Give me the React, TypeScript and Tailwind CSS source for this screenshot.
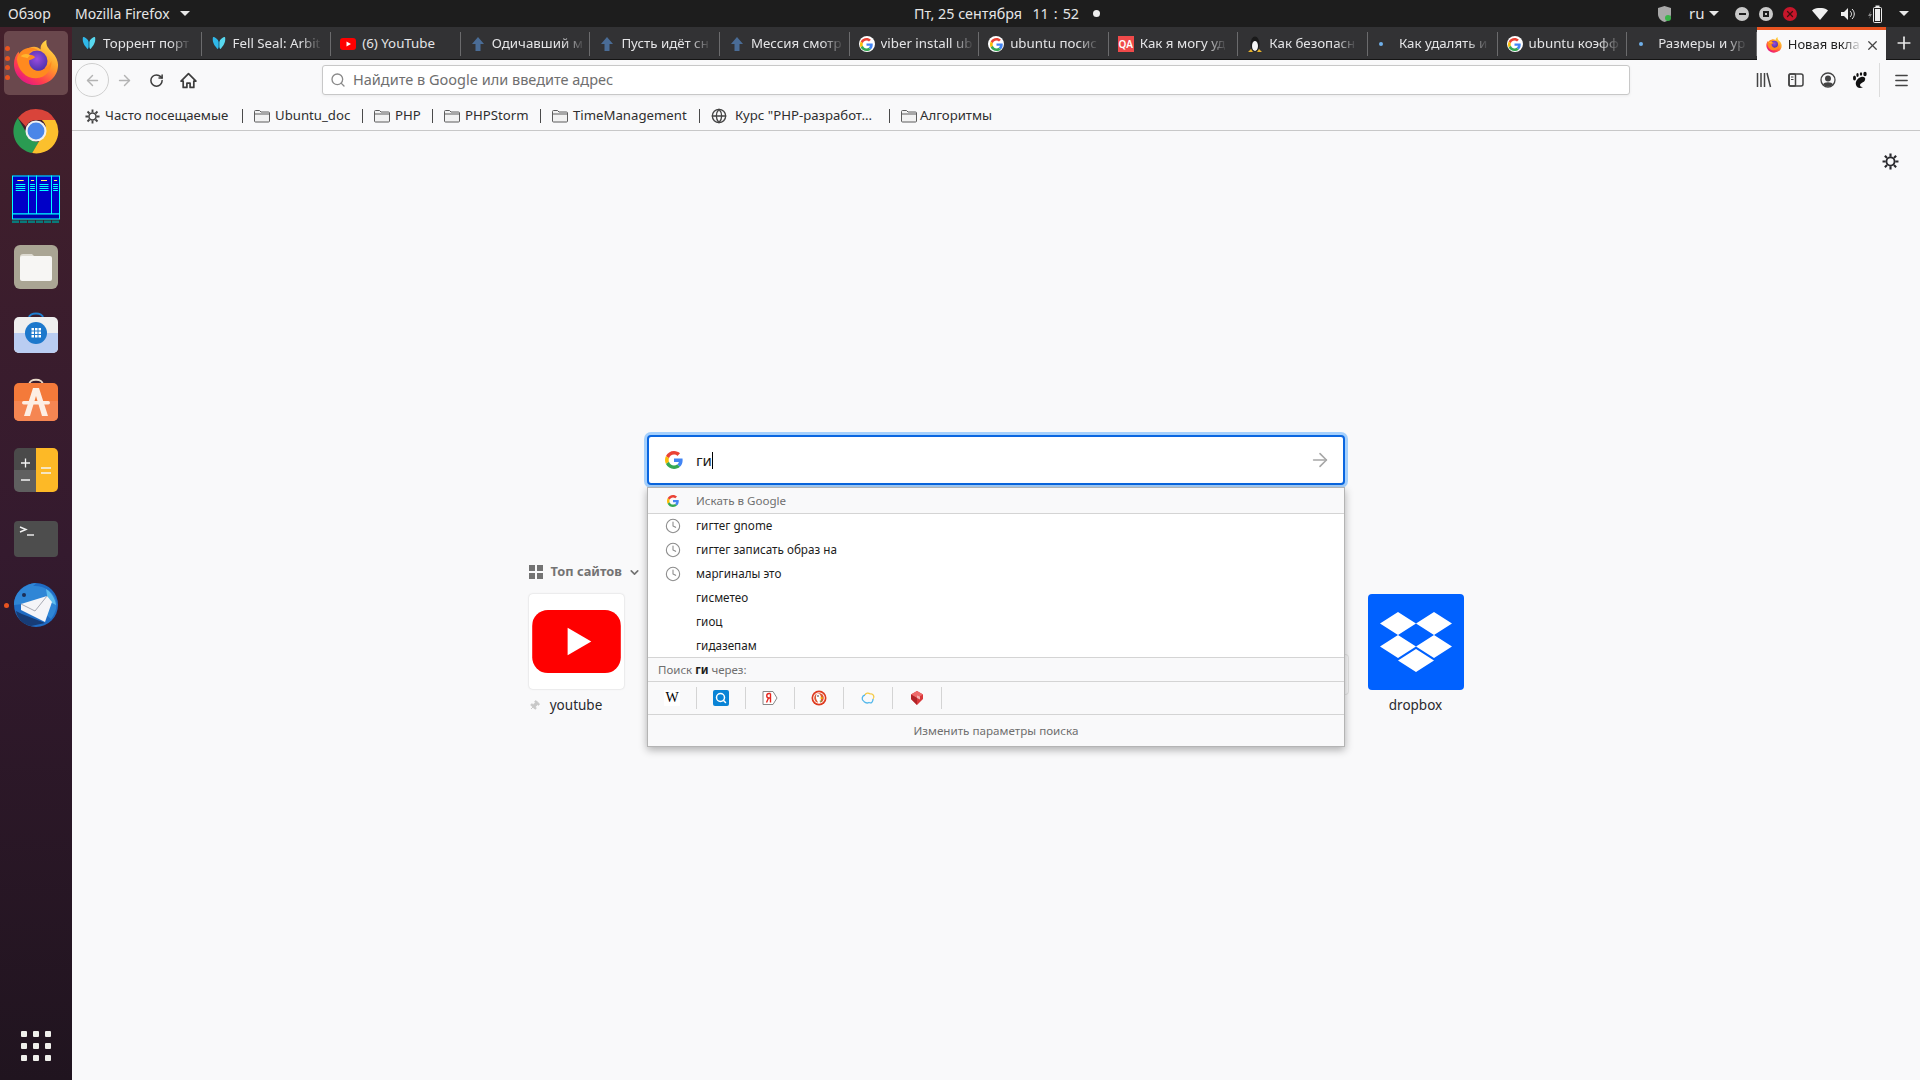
import React from "react";
import { ArrowLeft, ArrowRight, RotateCw, Search, Clock, ChevronDown, X, Plus, Globe, Menu, Pin } from "lucide-react";

function GoogleG({ size = 16 }: { size?: number }) {
  return (
    <svg width={size} height={size} viewBox="0 0 48 48">
      <path fill="#EA4335" d="M24 9.5c3.54 0 6.71 1.22 9.21 3.6l6.85-6.85C35.9 2.38 30.47 0 24 0 14.62 0 6.51 5.38 2.56 13.22l7.98 6.19C12.43 13.72 17.74 9.5 24 9.5z" />
      <path fill="#4285F4" d="M46.98 24.55c0-1.57-.15-3.09-.38-4.55H24v9.02h12.94c-.58 2.96-2.26 5.48-4.78 7.18l7.73 6c4.51-4.18 7.09-10.36 7.09-17.65z" />
      <path fill="#FBBC05" d="M10.53 28.59c-.48-1.45-.76-2.99-.76-4.59s.27-3.14.76-4.59l-7.98-6.19C.92 16.46 0 20.12 0 24c0 3.88.92 7.54 2.56 10.78l7.97-6.19z" />
      <path fill="#34A853" d="M24 48c6.48 0 11.93-2.13 15.89-5.81l-7.73-6c-2.15 1.45-4.92 2.3-8.16 2.3-6.26 0-11.57-4.22-13.47-9.91l-7.98 6.19C6.51 42.62 14.62 48 24 48z" />
    </svg>
  );
}

function SunGear({ size = 16, color = "#2a2a2e" }: { size?: number; color?: string }) {
  return (
    <svg width={size} height={size} viewBox="0 0 16 16" className="shrink-0">
      <circle cx="8" cy="8" r="3.800" fill="none" stroke={color} strokeWidth="1.700" />
      <path d="M8 0.500v3M8 12.500v3M0.500 8h3M12.500 8h3M2.700 2.700l2.100 2.100M11.200 11.200l2.100 2.100M13.300 2.700l-2.100 2.100M4.800 11.200l-2.100 2.100" stroke={color} strokeWidth="2" />
    </svg>
  );
}

function FirefoxIcon({ size = 44, id = "a" }: { size?: number; id?: string }) {
  return (
    <svg width={size} height={size} viewBox="0 0 48 48" className="shrink-0">
      <defs>
        <linearGradient id={`ff1${id}`} x1="0.85" y1="0.05" x2="0.2" y2="0.95">
          <stop offset="0" stopColor="#ffe04a" />
          <stop offset="0.4" stopColor="#ff9a2a" />
          <stop offset="0.75" stopColor="#ff3d4e" />
          <stop offset="1" stopColor="#e31587" />
        </linearGradient>
        <radialGradient id={`ff2${id}`} cx="0.5" cy="0.4" r="0.7">
          <stop offset="0" stopColor="#9a4ce0" />
          <stop offset="1" stopColor="#3c2da0" />
        </radialGradient>
      </defs>
      <path fill={`url(#ff1${id})`} d="M35 0c-1 6 2 9 6 13 4 4 6 9 6 13 0 12-10 21-23 21C11 47 1 37 1 25c0-5 2-10 5-13 0 2 1 4 2 5 2-4 5-7 9-9 5-2 9-1 12 2-1-4 2-8 6-10z" />
      <circle cx="25" cy="22" r="11" fill={`url(#ff2${id})`} />
      <path fill="#ff8a1f" d="M4 20c1-6 7-12 14-12 4 0 6 1 8 3-5-1-9 1-10 4 3 0 6 1 7 3-2 2-6 3-6 3-1 5 3 10 8 11 7 1 13-4 15-10 1 9-6 18-16 18C13 40 5 31 4 20z" />
      <path fill="#ffb52e" d="M8 17c3-3 7-3 10-1l-3 3c-3-1-5-1-7-2z" />
    </svg>
  );
}

function ChromeIcon() {
  return (
    <svg width="46" height="46" viewBox="0 0 48 48">
      <path fill="#d9443a" d="M24 1a23 23 0 0 1 20 11.500H24a11.500 11.500 0 0 0-10.500 7L5.200 10.500A23 23 0 0 1 24 1z" />
      <path fill="#2a9b52" d="M5 10.500l10 17a11 11 0 0 0 12.500 7.500L20 47A23 23 0 0 1 5 10.500z" />
      <path fill="#fbc02d" d="M44 12.500A23 23 0 0 1 20 47l10-17a11 11 0 0 0 0-17.500z" />
      <circle cx="24" cy="24" r="11" fill="#f1f1f1" />
      <circle cx="24" cy="24" r="8.800" fill="#4a86e8" />
    </svg>
  );
}

function ServerIcon() {
  const col = (x: number, w: number) => (
    <g key={x}>
      <rect x={x} y="1" width={w} height="38" fill="#0000c8" stroke="#00ffff" strokeWidth="1" />
      <rect x={x + w * 0.3} y="5" width={w * 0.4} height="1" fill="#ffff66" />
      {[9, 11, 13, 15].map((y) => (
        <rect key={y} x={x + w * 0.2} y={y} width={w * 0.6} height="1" fill="#00ffff" />
      ))}
    </g>
  );
  return (
    <svg width="48" height="48" viewBox="0 0 48 48">
      <rect x="0.500" y="0.500" width="47" height="39" fill="#0000a8" />
      {col(0.500, 16)}
      {col(16.500, 8)}
      {col(24.500, 15)}
      {col(39.500, 8)}
      <rect x="0.500" y="39" width="47" height="5" fill="#0000a8" stroke="#00ffff" />
      {[0, 8, 16, 24, 32, 40].map((x) => (
        <rect key={x} x={x} y="45.500" width="7" height="2.500" fill="#087a7a" />
      ))}
    </svg>
  );
}

function FilesIcon() {
  return (
    <svg width="44" height="44" viewBox="0 0 44 44">
      <rect width="44" height="44" rx="6" fill="#aaa594" />
      <path fill="#dedbd2" d="M6 12a3 3 0 0 1 3-3h9l4 4h12v6H6z" />
      <rect x="6" y="11" width="32" height="25" rx="2" fill="#f7f6f4" />
    </svg>
  );
}

function StoreIcon() {
  return (
    <svg width="44" height="44" viewBox="0 0 44 44">
      <path d="M15 7c0-6 14-6 14 0" fill="none" stroke="#1f7ed0" strokeWidth="2" />
      <rect y="6" width="44" height="36" rx="5" fill="#efefef" />
      <path d="M0 22h44v15a5 5 0 0 1-5 5H5a5 5 0 0 1-5-5z" fill="#bacdf2" />
      <circle cx="22" cy="22" r="11" fill="#1d78cc" />
      {[17.500, 21, 24.500].map((x) =>
        [17, 20.500, 24].map((y) => <rect key={`${x}${y}`} x={x} y={y} width="2.500" height="2.500" fill="#fff" />)
      )}
    </svg>
  );
}

function AppStoreIcon() {
  return (
    <svg width="44" height="44" viewBox="0 0 44 44">
      <path d="M15 7c0-7 14-7 14 0" fill="none" stroke="#e8d8c8" strokeWidth="2" />
      <rect y="5" width="44" height="38" rx="5" fill="#f47a3a" />
      <path d="M0 23h44v15a5 5 0 0 1-5 5H5a5 5 0 0 1-5-5z" fill="#f58652" />
      <path fill="#fdeee4" d="M19 10h6l9 28h-6l-6-20-6 20h-6z" />
      <rect x="8" y="23" width="28" height="3.500" rx="1.700" fill="#fdeee4" />
    </svg>
  );
}

function CalcIcon() {
  return (
    <svg width="44" height="44" viewBox="0 0 44 44">
      <path d="M22 0H5a5 5 0 0 0-5 5v17h22z" fill="#4a4a4a" />
      <path d="M22 22H0v17a5 5 0 0 0 5 5h17z" fill="#5f5f5f" />
      <path d="M22 0h17a5 5 0 0 1 5 5v34a5 5 0 0 1-5 5H22z" fill="#fdb926" />
      <path d="M7 15h9M11.500 10.500v9M7 32h9M27 20h10M27 25h10" stroke="#f4f4f4" strokeWidth="1.300" />
    </svg>
  );
}

function TerminalIcon() {
  return (
    <svg width="44" height="36" viewBox="0 0 44 36">
      <rect width="44" height="36" rx="4" fill="#4d4d4d" />
      <path d="M6 6l6 2.500L6 11" stroke="#f2f2f2" strokeWidth="1.400" fill="none" />
      <path d="M13 14h7" stroke="#f2f2f2" strokeWidth="1.400" />
    </svg>
  );
}

function ThunderbirdIcon() {
  return (
    <svg width="48" height="44" viewBox="0 0 48 44">
      <circle cx="24" cy="22" r="22" fill="#1f6cc4" />
      <path d="M2 22C2 10 12 1 24 0c-1 2-3 3-3 3 10-1 20 5 23 14 2 8-2 15-5 19L20 20z" fill="#2f86d6" />
      <path d="M34 6c5 3 9 9 10 16l-8-4z" fill="#5fbdee" />
      <path d="M9 21l26-8 5 6-7 20-24-12z" fill="#f5f5f8" />
      <path d="M9 21l14 7 12-15" fill="none" stroke="#a8aab4" strokeWidth="1" />
      <path d="M4 28c1 8 8 14 15 15l14-3-23-9z" fill="#173c76" />
      <circle cx="12" cy="12" r="2" fill="#1c2f55" />
    </svg>
  );
}

function DockItem({ children, className = "" }: { children: React.ReactNode; className?: string }) {
  return <div className={`flex items-center justify-center w-[72px] ${className}`}>{children}</div>;
}

function Dock() {
  return (
    <aside className="w-[72px] shrink-0 h-full flex flex-col items-center bg-gradient-to-b from-[#43202b] via-[#341a2e] to-[#20141f]">
      <div className="relative mt-1 w-16 h-16 rounded-[5px] bg-[#6a484d] flex items-center justify-center">
        <FirefoxIcon size={46} id="dock" />
        <div className="absolute left-[1px] top-[15px] flex flex-col gap-[4.600px]">
          {[0, 1, 2, 3].map((i) => (
            <span key={i} className="block w-[5px] h-[5px] rounded-full bg-[#e95420]" />
          ))}
        </div>
      </div>
      <DockItem className="mt-[13px] h-[46px]"><ChromeIcon /></DockItem>
      <DockItem className="mt-[21px] h-[48px]"><ServerIcon /></DockItem>
      <DockItem className="mt-[22px] h-[44px]"><FilesIcon /></DockItem>
      <DockItem className="mt-[22px] h-[44px]"><StoreIcon /></DockItem>
      <DockItem className="mt-[23px] h-[44px]"><AppStoreIcon /></DockItem>
      <DockItem className="mt-[26px] h-[44px]"><CalcIcon /></DockItem>
      <DockItem className="mt-[29px] h-[36px]"><TerminalIcon /></DockItem>
      <DockItem className="mt-[26px] h-[44px] relative">
        <ThunderbirdIcon />
        <span className="absolute left-[4px] top-[20px] w-[5px] h-[5px] rounded-full bg-[#e95420]" />
      </DockItem>
      <div className="mt-auto mb-[19px] grid grid-cols-3 gap-[6px]">
        {Array.from({ length: 9 }).map((_, i) => (
          <span key={i} className="block w-[6px] h-[6px] rounded-[1px] bg-[#f0f0ec]" />
        ))}
      </div>
    </aside>
  );
}

function Caret({ className = "" }: { className?: string }) {
  return <span className={`inline-block w-0 h-0 border-l-[5px] border-r-[5px] border-t-[5px] border-l-transparent border-r-transparent border-t-[#e8e8e8] ${className}`} />;
}

function TopBar() {
  return (
    <header className="h-[27px] shrink-0 bg-[#1d1d1d] text-[#e6e6e6] text-[14px] flex items-center relative">
      <span className="ml-[8px] w-[67px]">Обзор</span>
      <span className="w-[105px] whitespace-nowrap">Mozilla Firefox</span>
      <Caret />
      <div className="ml-[724px] w-[165px] flex justify-between whitespace-nowrap text-[14.300px]">
        <span>Пт, 25 сентября</span>
        <span className="flex gap-[5px]"><span>11</span><span>:</span><span>52</span></span>
      </div>
      <span className="ml-[14px] w-[7px] h-[7px] rounded-full bg-[#eeeeee]" />
      <div className="ml-auto flex items-center h-full">
        <svg width="15" height="18" viewBox="0 0 15 18" className="mr-[17px]">
          <path d="M7.500 1L14 3v6c0 4-3 7-6.500 8C4 16 1 13 1 9V3z" fill="#a8a8a8" />
          <circle cx="11" cy="13" r="3" fill="#3ab54a" />
        </svg>
        <span className="text-[15px] mr-[6px] w-[14px]">ru</span>
        <Caret className="mr-[16px]" />
        <span className="w-[14px] h-[14px] rounded-full bg-[#c9c9c9] flex items-center justify-center mr-[10px]"><span className="w-[7px] h-[2px] bg-[#1d1d1d]" /></span>
        <span className="w-[14px] h-[14px] rounded-full bg-[#c9c9c9] flex items-center justify-center mr-[10px]"><span className="w-[6px] h-[6px] border-2 border-[#1d1d1d]" /></span>
        <span className="w-[14px] h-[14px] rounded-full bg-[#c7162b] flex items-center justify-center mr-[15px]"><X size={10} strokeWidth={3} color="#401010" /></span>
        <svg width="16" height="12" viewBox="0 0 16 12" className="mr-[13px]"><path d="M0 2.500C4-1 12-1 16 2.500L8 12z" fill="#f0f0f0" /></svg>
        <svg width="16" height="14" viewBox="0 0 16 14" className="mr-[11px]"><path d="M0 5h3l4-4v12l-4-4H0z" fill="#eee" /><path d="M9 4c2 2 2 4 0 6M11 2c3 3 3 7 0 10" stroke="#eee" fill="none" /></svg>
        <svg width="14" height="18" viewBox="0 0 14 18" className="mr-[17px]">
          <path d="M3 6L0 11h2l-1 3 3-5H2z" fill="#888" />
          <rect x="5.500" y="2.500" width="8" height="15" rx="1" fill="none" stroke="#eee" />
          <rect x="7" y="4" width="5" height="12" fill="#eee" />
          <rect x="7.500" y="0.500" width="4" height="2" fill="#eee" />
        </svg>
        <Caret className="mr-[11px]" />
      </div>
    </header>
  );
}

function Arrow() {
  return (
    <svg width="14" height="16" viewBox="0 0 14 16">
      <path d="M7 1l6 7H9.500v7h-5V8H1z" fill="#4a6c96" />
    </svg>
  );
}

function Dot() {
  return <span className="block w-[4px] h-[4px] rounded-full bg-[#6fb0ea] mr-[7px]" />;
}

function Penguin() {
  return (
    <svg width="16" height="18" viewBox="0 0 16 18">
      <ellipse cx="8" cy="9" rx="4.500" ry="7.500" fill="#1a1a1a" />
      <ellipse cx="8" cy="11" rx="3" ry="5" fill="#f4f4f4" />
      <path d="M1 17l3-3 2 3zM15 17l-3-3-2 3z" fill="#e8b32c" />
    </svg>
  );
}

function GFav() {
  return (
    <span className="w-4 h-4 rounded-full bg-white flex items-center justify-center">
      <GoogleG size={13} />
    </span>
  );
}

function Butterfly() {
  return (
    <svg width="16" height="16" viewBox="0 0 16 16">
      <path d="M8 6C7 3 4 1 2 1c-1 4 1 8 3 10 1 2 2 3 3 0z" fill="#2fb7e8" />
      <path d="M8 6c1-3 4-5 6-5 1 4-1 8-3 10-1 2-2 3-3 0z" fill="#58d8ef" />
      <path d="M7.700 4h.6v10h-.6z" fill="#10233a" />
    </svg>
  );
}

const tabs: { icon: React.ReactNode; label: string }[] = [
  { icon: <Butterfly />, label: "Торрент порт" },
  { icon: <Butterfly />, label: "Fell Seal: Arbit" },
  { icon: <svg width="16" height="12" viewBox="0 0 16 12"><rect width="16" height="12" rx="3" fill="#f00" /><path d="M6.500 3.500v5L11 6z" fill="#fff" /></svg>, label: "(6) YouTube" },
  { icon: <Arrow />, label: "Одичавший м" },
  { icon: <Arrow />, label: "Пусть идёт сн" },
  { icon: <Arrow />, label: "Мессия смотр" },
  { icon: <GFav />, label: "viber install ub" },
  { icon: <GFav />, label: "ubuntu посис" },
  { icon: <span className="w-4 h-4 bg-[#f04a4a] text-white text-[10px] leading-4 text-center font-semibold">QA</span>, label: "Как я могу уд" },
  { icon: <Penguin />, label: "Как безопасн" },
  { icon: <Dot />, label: "Как удалять и" },
  { icon: <GFav />, label: "ubuntu коэфф" },
  { icon: <Dot />, label: "Размеры и ур" },
];

function Tab({ icon, label }: { icon: React.ReactNode; label: string }) {
  return (
    <div className="w-[129.600px] h-full shrink-0 flex items-center relative pl-[9px] pr-[8px] pt-[2px] gap-[6px] text-[13.300px] text-[#e4e4e6]">
      <span className="w-4 h-4 shrink-0 flex items-center justify-center">{icon}</span>
      <span className={label === "(6) YouTube" ? "whitespace-nowrap" : "whitespace-nowrap [mask-image:linear-gradient(to_right,#000_78%,rgba(0,0,0,0.1)_100%)]"}>{label}</span>
      <span className="absolute right-0 top-[5px] bottom-[3px] w-px bg-[#6b6b6d]" />
    </div>
  );
}

function TabBar() {
  return (
    <div className="h-[33px] shrink-0 bg-[#323234] flex border-b border-[#151515]">
      {tabs.map((t, i) => <Tab key={i} icon={t.icon} label={t.label} />)}
      <div className="w-[129.600px] h-[33px] shrink-0 bg-[#f9f9fa] border-t-[3px] border-[#e95420] flex items-center pl-[9px] gap-[5px] text-[13px] text-[#222]">
        <FirefoxIcon size={16} id="tab" />
        <span className="ml-[1px] whitespace-nowrap [mask-image:linear-gradient(to_right,#000_75%,rgba(0,0,0,0.1)_100%)]">Новая вкла</span>
        <X size={15} className="ml-auto mr-[9px] shrink-0" color="#444" />
      </div>
      <div className="flex-1 flex items-center justify-center pl-[2px]"><Plus size={20} color="#e8e8e8" /></div>
    </div>
  );
}

function NavBar() {
  return (
    <div className="h-[40px] shrink-0 bg-[#f9f9fa] flex items-center">
      <div className="ml-[3px] w-[34px] h-[34px] rounded-full border border-[#cfcfcf] flex items-center justify-center">
        <ArrowLeft size={17} color="#b3b3b3" />
      </div>
      <ArrowRight size={17} color="#b3b3b3" className="ml-[7px]" />
      <RotateCw size={15} color="#3d3d3d" strokeWidth={2.400} className="ml-[16px]" />
      <svg width="17" height="17" viewBox="0 0 16 16" className="ml-[16px]">
        <path d="M8 1.500L1 8.500h2v6h3.500v-4h3v4H13v-6h2z" fill="none" stroke="#3d3d3d" strokeWidth="1.600" strokeLinejoin="round" />
      </svg>
      <div className="ml-[125px] w-[1308px] h-[30px] bg-white border border-[#c8c8c8] rounded-[3px] flex items-center pl-[7px] text-[14.500px] text-[#6f6f6f] shadow-[0_1px_3px_rgba(0,0,0,0.06)]">
        <Search size={16} color="#8a8a8a" strokeWidth={2} className="mr-[7px]" />
        Найдите в Google или введите адрес
      </div>
      <svg width="16" height="16" viewBox="0 0 16 16" className="ml-[126px]">
        <path d="M1.500 1v14M5 1v14M8.500 1v14M11 1l3.500 14" stroke="#444" strokeWidth="1.500" fill="none" />
      </svg>
      <svg width="16" height="16" viewBox="0 0 16 16" className="ml-[16px]">
        <rect x="1" y="2" width="14" height="12" rx="2" fill="none" stroke="#444" strokeWidth="1.500" />
        <rect x="1" y="2" width="6.500" height="12" rx="1" fill="none" stroke="#444" strokeWidth="1.500" />
        <path d="M3 5h2.500M3 7.500h2.500" stroke="#444" />
      </svg>
      <svg width="16" height="16" viewBox="0 0 16 16" className="ml-[16px]">
        <circle cx="8" cy="8" r="7" fill="none" stroke="#444" strokeWidth="1.300" />
        <circle cx="8" cy="6.500" r="3" fill="#444" />
        <path d="M3 12.500c1-3 9-3 10 0-2 2.500-8 2.500-10 0z" fill="#444" />
      </svg>
      <svg width="16" height="18" viewBox="0 0 16 18" className="ml-[16px]">
        <path d="M9 6c3-1 5 1 4 3-1 3-4 2-5 5 0 2 2 2 3 2-3 2-6 1-7-2-1-4 2-7 5-8z" fill="#111" />
        <ellipse cx="2.500" cy="7" rx="1.500" ry="2.500" fill="#111" /><ellipse cx="5.500" cy="4" rx="1.200" ry="2" fill="#111" /><ellipse cx="9" cy="3" rx="1.200" ry="1.800" fill="#111" /><ellipse cx="13" cy="3" rx="1.700" ry="2.200" fill="#111" />
      </svg>
      <span className="ml-[11px] w-px h-[34px] bg-[#dcdcdc]" />
      <Menu size={17} color="#444" strokeWidth={2} className="ml-[13px]" />
    </div>
  );
}

function Folder() {
  return (
    <svg width="16" height="14" viewBox="0 0 16 14" className="shrink-0">
      <path d="M0.500 2.500a1 1 0 0 1 1-1h4l1.500 1.500h7.500a1 1 0 0 1 1 1V12a1 1 0 0 1-1 1h-13a1 1 0 0 1-1-1z" fill="#f2f2f2" stroke="#5c5c5c" />
      <path d="M0.500 5h15" stroke="#5c5c5c" />
    </svg>
  );
}

function BookmarkItem({ w, icon, text, gap = "gap-[5px]", sep = true }: { w: string; icon: React.ReactNode; text: string; gap?: string; sep?: boolean }) {
  return (
    <div className={`${w} shrink-0 h-full flex items-center pl-[11px] ${gap} relative whitespace-nowrap`}>
      {icon}
      <span>{text}</span>
      {sep && <span className="absolute right-0 top-[7px] bottom-[7px] w-px bg-[#4a4a4a]" />}
    </div>
  );
}

function Bookmarks() {
  return (
    <div className="h-[31px] shrink-0 bg-[#f9f9fa] border-b border-[#c8c8c8] pt-[2px] flex items-center text-[13.200px] text-[#2f2f2f]">
      <BookmarkItem w="w-[171px] pl-[13px]" icon={<SunGear size={15} color="#444" />} text="Часто посещаемые" />
      <BookmarkItem w="w-[120px]" icon={<Folder />} text="Ubuntu_doc" />
      <BookmarkItem w="w-[70px]" icon={<Folder />} text="PHP" />
      <BookmarkItem w="w-[108px]" icon={<Folder />} text="PHPStorm" />
      <BookmarkItem w="w-[159px]" icon={<Folder />} text="TimeManagement" />
      <BookmarkItem w="w-[190px]" gap="gap-[8px]" icon={<Globe size={16} color="#444" strokeWidth={2} />} text='Курс "PHP-разработ...' />
      <BookmarkItem w="w-[120px]" gap="gap-[3px]" icon={<Folder />} text="Алгоритмы" sep={false} />
    </div>
  );
}

function SuggestRow({ text, clock }: { text: string; clock?: boolean }) {
  return (
    <div className="h-6 flex items-center text-[11.700px] text-[#1c1c1c]">
      <span className="w-[48px] flex justify-center pl-[2px] shrink-0">
        {clock && <Clock size={16} color="#8c8c8c" strokeWidth={1.600} />}
      </span>
      {text}
    </div>
  );
}

function Engines() {
  const sep = "w-[49px] h-[22px] flex items-center justify-center border-r border-[#d4d4d4]";
  return (
    <div className="h-[33px] flex items-center border-b border-[#d4d4d4]">
      <div className={sep}>
        <span className="w-4 h-4 bg-white text-center leading-4 text-[14px] text-black font-['Liberation_Serif',serif]">W</span>
      </div>
      <div className={sep}>
        <span className="w-4 h-4 rounded-[2px] bg-[#0a84d6] flex items-center justify-center"><Search size={12} color="#fff" strokeWidth={3} /></span>
      </div>
      <div className={sep}>
        <svg width="16" height="16" viewBox="0 0 16 16">
          <path d="M1 1.500h10l4 6.500-4 6.500H1z" fill="#fff" stroke="#888" />
          <path d="M8.500 3.500v9M8.500 3.500H7c-3 0-3 4.500 0 4.500h1.500M6.500 8l-2 4.500" fill="none" stroke="#e5261f" strokeWidth="1.400" />
        </svg>
      </div>
      <div className={sep}>
        <svg width="16" height="16" viewBox="0 0 16 16">
          <circle cx="8" cy="8" r="7.500" fill="#de3a1f" />
          <circle cx="8" cy="8" r="5.800" fill="#fff" />
          <circle cx="8" cy="8" r="4.800" fill="#de5833" />
          <path d="M6 3.500c3 0 4 2 4 4.500s-1 4-1 5H7c0-2-2-3-2-5s0-3 1-4.500z" fill="#fff" />
          <circle cx="7" cy="6" r="0.800" fill="#223" />
          <path d="M8 8l3.500-1v2z" fill="#f5c400" />
          <path d="M8 11l2.500-.5v1.500z" fill="#4cba3c" />
        </svg>
      </div>
      <div className={sep}>
        <svg width="16" height="16" viewBox="0 0 16 16" fill="none">
          <path d="M5 5a3 3 0 0 1 5-1" stroke="#f5c944" strokeWidth="1.300" />
          <path d="M10 4a3 3 0 0 1 3 5" stroke="#f5c944" strokeWidth="1.300" />
          <path d="M5 5a3.500 3.500 0 0 0-1 6.500" stroke="#4fb6ea" strokeWidth="1.300" />
          <path d="M4 11.500c2 2 3 2 5 1 2 1 4 0 4-3.500" stroke="#4fb6ea" strokeWidth="1.300" />
        </svg>
      </div>
      <div className={sep}>
        <svg width="16" height="16" viewBox="0 0 16 16">
          <path d="M8 1l6 3.500V9l-6 6-6-6V4.500z" fill="#d9383a" />
          <path d="M2 4.500L8 8l6-3.500L8 1z" fill="#ee6a6a" />
          <path d="M8 8v7l-6-6V4.500z" fill="#b12428" />
          <path d="M8 5.500l3 1v3l-3-1.500z" fill="#f4b0b0" />
        </svg>
      </div>
    </div>
  );
}

function SearchBox() {
  return (
    <div className="relative w-[698px] h-[50px] self-center">
      <div className="h-full bg-white border-2 border-[#0a66e0] rounded-[4px] ring-[3px] ring-[#0a84ff]/35 flex items-center pl-[16px] pr-[12px]">
        <GoogleG size={18} />
        <span className="ml-[11px] pl-[2px] text-[15px] text-[#1c1c1c]">ги</span>
        <span className="w-px h-[17px] bg-black" />
        <ArrowRight size={22} color="#a6a6a6" strokeWidth={1.700} className="ml-auto" />
      </div>
      <div className="absolute z-10 left-0 top-[52px] w-[698px] h-[260px] bg-white border border-[#b4b4b4] shadow-[0_3px_8px_rgba(0,0,0,0.3)]">
        <div className="h-[26px] pt-[1px] bg-[#f9f9fa] border-b border-[#d4d4d4] flex items-center text-[11.600px] text-[#6f6f6f]">
          <span className="w-[48px] flex justify-center pl-[2px] shrink-0"><GoogleG size={12} /></span>
          Искать в Google
        </div>
        <SuggestRow clock text="гигтег gnome" />
        <SuggestRow clock text="гигтег записать образ на" />
        <SuggestRow clock text="маргиналы это" />
        <SuggestRow text="гисметео" />
        <SuggestRow text="гиоц" />
        <SuggestRow text="гидазепам" />
        <div className="bg-[#f9f9fa] -mt-[1px]">
          <div className="h-[25px] border-y border-[#d4d4d4] flex items-center pl-[10px] pt-[1px] text-[11.500px] text-[#6f6f6f]">
            Поиск&nbsp;<b className="text-[#1c1c1c]">ги</b>&nbsp;через:
          </div>
          <Engines />
          <div className="h-[31px] flex items-center justify-center text-[11.650px] text-[#6f6f6f]">Изменить параметры поиска</div>
        </div>
      </div>
    </div>
  );
}

function TopSites() {
  return (
    <div className="w-[935px] self-center mt-[79px] relative">
      <div className="h-[16px] flex items-center text-[12.800px] font-bold text-[#737373]">
        <svg width="14" height="14" viewBox="0 0 14 14" className="mr-[8px]">
          <path d="M0 0h6v6H0zM8 0h6v6H8zM0 8h6v6H0zM8 8h6v6H8z" fill="#737373" />
        </svg>
        Топ сайтов
        <ChevronDown size={13} color="#737373" strokeWidth={3} className="ml-[6px]" />
      </div>
      <div className="mt-[14px] flex justify-between">
        <div className="w-[95px]">
          <div className="w-[95px] h-[95px] bg-white rounded-[4px] shadow-[0_0_2px_rgba(0,0,0,0.2)] flex items-center justify-center">
            <svg width="89" height="63" viewBox="0 0 90 64">
              <rect width="90" height="64" rx="16" fill="#ff0000" />
              <path d="M36 18v28l24-14z" fill="#fff" />
            </svg>
          </div>
          <div className="mt-[6px] h-5 flex items-center justify-center relative text-[13.500px] text-[#2a2a2e]">
            <Pin size={11} color="#c8c8c8" fill="#c8c8c8" className="absolute left-0 top-[5px] rotate-45" />
            youtube
          </div>
        </div>
        <div className="w-[96px]">
          <div className="w-[96px] h-[96px] bg-[#0061ff] rounded-[4px] flex items-center justify-center">
            <svg width="72" height="60" viewBox="0 0 72 60">
              <path fill="#fff" d="M18 0l18 11.500L18 23 0 11.500zM54 0l18 11.500L54 23 36 11.500zM18 23l18 11.500L18 46 0 34.500zM54 23l18 11.500L54 46 36 34.500zM36 37l18 11.500L36 60 18 48.500z" />
            </svg>
          </div>
          <div className="mt-[5px] h-5 flex items-center justify-center text-[13.500px] text-[#2a2a2e]">dropbox</div>
        </div>
      </div>
      <div className="absolute left-[815px] top-[90px] w-[5px] h-[41px] rounded-r-[4px] border border-l-0 border-[#e4e4e4] bg-[#f9f9fa]">
        <span className="block mt-[6px] w-[1px] h-[27px] bg-[#c93a10]" />
      </div>
    </div>
  );
}

export default function App() {
  return (
    <div className="w-[1920px] h-[1080px] flex flex-col overflow-hidden font-['Noto_Sans','Liberation_Sans',sans-serif]">
      <TopBar />
      <div className="flex-1 flex min-h-0">
        <Dock />
        <div className="flex-1 flex flex-col min-w-0">
          <TabBar />
          <NavBar />
          <Bookmarks />
          <main className="flex-1 bg-[#f9f9fa] flex flex-col">
            <div className="h-[304px] flex justify-end pt-[22px] pr-[21px]">
              <SunGear size={17} color="#2a2a2e" />
            </div>
            <SearchBox />
            <TopSites />
          </main>
        </div>
      </div>
    </div>
  );
}
